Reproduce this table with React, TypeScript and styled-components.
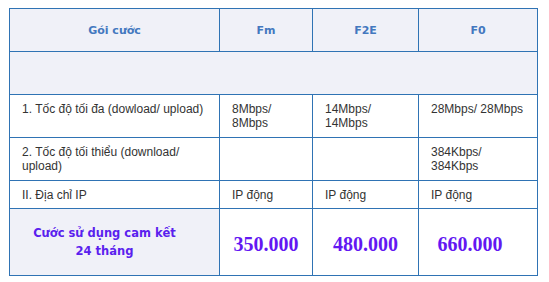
import { createGlobalStyle } from "styled-components"
import styled from "styled-components"

const Global = createGlobalStyle`
  body {
    margin: 0;
    background: #fff;
  }
`

const Wrap = styled.div`
  padding: 8px 9px;
`

const Table = styled.table`
  border-collapse: collapse;
  table-layout: fixed;
  width: 528px;
  font-family: "Liberation Sans", Arial, sans-serif;
  font-size: 12px;
  color: #333;
`

const HeadCell = styled.th`
  border: 1px solid #2f73b4;
  background: #f0f1f8;
  height: 42px;
  padding: 0;
  text-align: center;
  vertical-align: middle;
  font-family: "DejaVu Sans", Tahoma, sans-serif;
  font-size: 11px;
  font-weight: bold;
  color: #4378bf;
`

const BlankRow = styled.td`
  border: 1px solid #2f73b4;
  background: #f0f1f8;
  height: 42px;
  padding: 0;
`

const Cell = styled.td<{ $h: number }>`
  border: 1px solid #2f73b4;
  height: ${p => p.$h}px;
  padding: 7px 8px 0 12px;
  vertical-align: top;
  line-height: 14px;
  box-sizing: border-box;
`

const LabelCell = styled.td`
  border: 1px solid #2f73b4;
  background: #f0f1f8;
  height: 67px;
  padding: 0 20px 0 0;
  text-align: center;
  vertical-align: middle;
  font-family: "DejaVu Sans", Tahoma, sans-serif;
  font-size: 11.5px;
  font-weight: bold;
  line-height: 18px;
  color: #5b1fee;
  box-sizing: border-box;
`

const PriceCell = styled.td<{ $shift?: number }>`
  border: 1px solid #2f73b4;
  padding: 4px ${p => p.$shift ?? 0}px 0 0;
  text-align: center;
  vertical-align: middle;
  font-family: "Liberation Serif", "Times New Roman", serif;
  font-size: 20px;
  font-weight: bold;
  color: #6318f2;
`

const rows = [
  { label: "1. Tốc độ tối đa (dowload/ upload)", vals: ["8Mbps/ 8Mbps", "14Mbps/ 14Mbps", "28Mbps/ 28Mbps"], h: 43 },
  { label: "2. Tốc độ tối thiểu (download/ upload)", vals: ["", "", "384Kbps/ 384Kbps"], h: 43 },
  { label: "II. Địa chỉ IP", vals: ["IP động", "IP động", "IP động"], h: 28 },
]

export default function App() {
  return (
    <Wrap>
      <Global />
      <Table>
        <colgroup>
          <col style={{ width: 210 }} />
          <col style={{ width: 93 }} />
          <col style={{ width: 106 }} />
          <col style={{ width: 119 }} />
        </colgroup>
        <thead>
          <tr>
            <HeadCell>Gói cước</HeadCell>
            <HeadCell>Fm</HeadCell>
            <HeadCell>F2E</HeadCell>
            <HeadCell>F0</HeadCell>
          </tr>
        </thead>
        <tbody>
          <tr>
            <BlankRow colSpan={4} />
          </tr>
          {rows.map(r => (
            <tr key={r.label}>
              <Cell $h={r.h}>{r.label}</Cell>
              {r.vals.map((v, i) => (
                <Cell $h={r.h} key={i}>{v}</Cell>
              ))}
            </tr>
          ))}
          <tr>
            <LabelCell>Cước sử dụng cam kết<br />24 tháng</LabelCell>
            <PriceCell>350.000</PriceCell>
            <PriceCell>480.000</PriceCell>
            <PriceCell $shift={16}>660.000</PriceCell>
          </tr>
        </tbody>
      </Table>
    </Wrap>
  )
}
